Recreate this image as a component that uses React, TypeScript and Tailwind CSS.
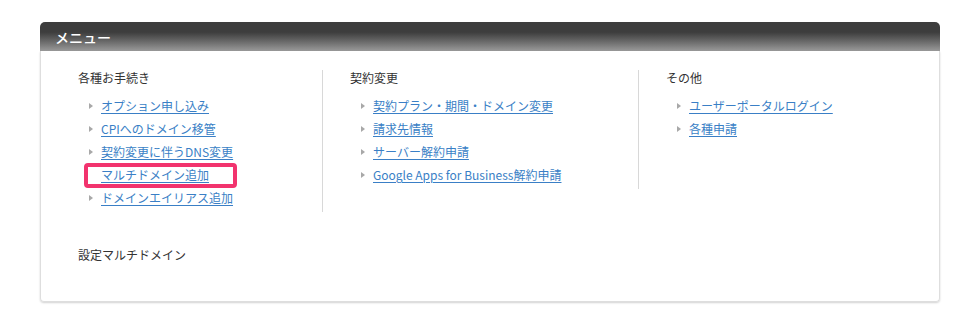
import React from 'react'

const font = { fontFamily: '"Noto Sans CJK JP", "Noto Sans", sans-serif' }

type Item = { label: string; highlight?: boolean }

const columns: { title: string; items: Item[]; className: string }[] = [
  {
    title: '各種お手続き',
    className: 'w-[282px] pl-[37px] border-r border-[#d8d8d8]',
    items: [
      { label: 'オプション申し込み' },
      { label: 'CPIへのドメイン移管' },
      { label: '契約変更に伴うDNS変更' },
      { label: 'マルチドメイン追加', highlight: true },
      { label: 'ドメインエイリアス追加' },
    ],
  },
  {
    title: '契約変更',
    className: 'w-[316px] pl-[27px] border-r border-[#d8d8d8]',
    items: [
      { label: '契約プラン・期間・ドメイン変更' },
      { label: '請求先情報' },
      { label: 'サーバー解約申請' },
      { label: 'Google Apps for Business解約申請' },
    ],
  },
  {
    title: 'その他',
    className: 'flex-1 pl-[27px]',
    items: [{ label: 'ユーザーポータルログイン' }, { label: '各種申請' }],
  },
]

function Bullet() {
  return (
    <span className="inline-block w-0 h-0 border-y-[3px] border-y-transparent border-l-[4px] border-l-[#a8a8a8] mr-[8px]" />
  )
}

export default function App() {
  return (
    <div className="min-h-screen bg-white pt-[22px] pl-[40px]" style={font}>
      <div className="w-[900px]">
        <div className="h-[29px] rounded-t-[5px] bg-gradient-to-b from-[#3d3d3d] from-[35%] to-[#9a9a9a] flex items-center px-[15px]">
          <span className="text-white text-[14px] font-medium leading-none">メニュー</span>
        </div>
        <div className="border border-t-0 border-[#dedede] rounded-b-[4px] shadow-[0_1px_2px_rgba(0,0,0,0.18)] pt-[19px] pb-[38px]">
          <div className="flex items-start">
            {columns.map((col) => (
              <div key={col.title} className={`${col.className} pb-[3px]`}>
                <div className="h-[16px] leading-[16px] text-[12px] text-[#333] mb-[8px]">{col.title}</div>
                <ul>
                  {col.items.map((item) => (
                    <li key={item.label} className="relative h-[23px] leading-[23px] text-[12px] pl-[11px] flex items-center">
                      {item.highlight ? (
                        <>
                          <span className="absolute left-[6px] top-0 w-[153px] h-[25px] border-4 border-[#f2336e] rounded-[4px] bg-white" />
                          <span className="inline-block w-[4px] mr-[8px]" />
                        </>
                      ) : (
                        <Bullet />
                      )}
                      <a href="#" className="relative text-[#3a7fc6] underline underline-offset-[2px]">
                        {item.label}
                      </a>
                    </li>
                  ))}
                </ul>
              </div>
            ))}
          </div>
          <p className="mt-[35px] pl-[37px] h-[16px] leading-[16px] text-[12px] text-[#333]">設定マルチドメイン</p>
        </div>
      </div>
    </div>
  )
}
